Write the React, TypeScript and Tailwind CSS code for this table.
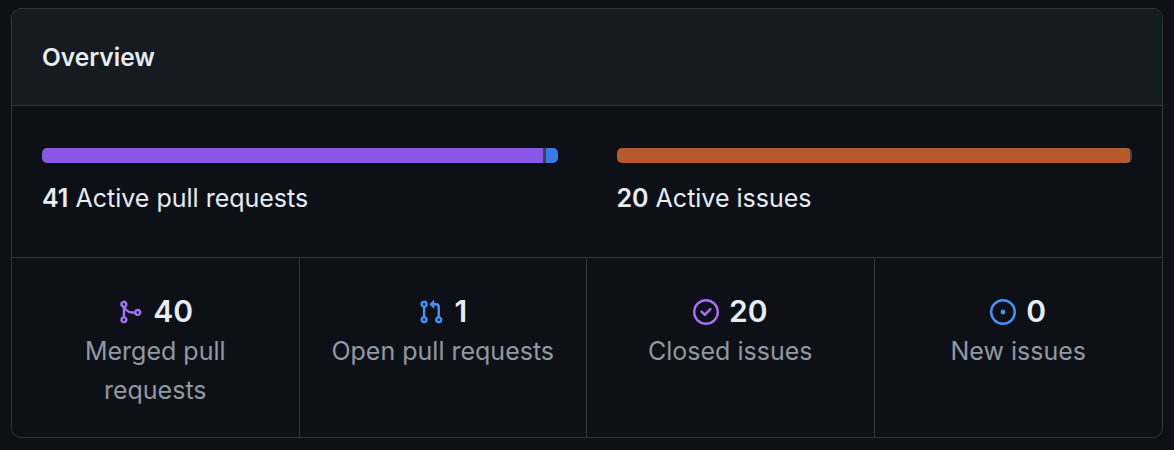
const font = { fontFamily: 'Inter, "Noto Sans", "Liberation Sans", sans-serif' }

function MergeIcon() {
  return (
    <svg viewBox="0 0 16 16" className="w-[26px] h-[26px]" fill="#a371f7">
      <path d="M5.45 5.154A4.25 4.25 0 0 0 9.25 7.5h1.378a2.251 2.251 0 1 1 0 1.5H9.25A5.734 5.734 0 0 1 5 7.123v3.505a2.25 2.25 0 1 1-1.5 0V5.372a2.25 2.25 0 1 1 1.950-.218ZM4.25 13.5a.75.75 0 1 0 0-1.5.75.75 0 0 0 0 1.5Zm8.5-4.5a.75.75 0 1 0 0-1.5.75.75 0 0 0 0 1.5ZM5 3.25a.75.75 0 1 0 0 .005V3.25Z" />
    </svg>
  )
}

function PullIcon() {
  return (
    <svg viewBox="0 0 16 16" className="w-[26px] h-[26px]" fill="#4493f8">
      <path d="M1.5 3.25a2.25 2.25 0 1 1 3 2.122v5.256a2.251 2.251 0 1 1-1.5 0V5.372A2.25 2.25 0 0 1 1.5 3.25Zm5.677-.177L9.573.677A.25.25 0 0 1 10 .854V2.5h1A2.5 2.5 0 0 1 13.5 5v5.628a2.251 2.251 0 1 1-1.5 0V5a1 1 0 0 0-1-1h-1v1.646a.25.25 0 0 1-.427.177L7.177 3.427a.25.25 0 0 1 0-.354ZM3.75 2.5a.75.75 0 1 0 0 1.5.75.75 0 0 0 0-1.5Zm0 9.5a.75.75 0 1 0 0 1.5.75.75 0 0 0 0-1.5Zm8.25.75a.75.75 0 1 0 1.5 0 .75.75 0 0 0-1.5 0Z" />
    </svg>
  )
}

function ClosedIcon() {
  return (
    <svg viewBox="0 0 16 16" className="w-[26px] h-[26px]" fill="#a371f7">
      <path d="M11.28 6.78a.75.75 0 0 0-1.06-1.06L7.25 8.69 5.78 7.22a.75.75 0 0 0-1.06 1.06l2 2a.75.75 0 0 0 1.06 0l3.5-3.5Z" />
      <path d="M16 8A8 8 0 1 1 0 8a8 8 0 0 1 16 0Zm-1.5 0a6.5 6.5 0 1 0-13 0 6.5 6.5 0 0 0 13 0Z" />
    </svg>
  )
}

function OpenIssueIcon() {
  return (
    <svg viewBox="0 0 16 16" className="w-[26px] h-[26px]" fill="#4493f8">
      <path d="M8 9.5a1.5 1.5 0 1 0 0-3 1.5 1.5 0 0 0 0 3Z" />
      <path d="M8 0a8 8 0 1 1 0 16A8 8 0 0 1 8 0ZM1.5 8a6.5 6.5 0 1 0 13 0 6.5 6.5 0 0 0-13 0Z" />
    </svg>
  )
}

const stats = [
  { icon: <MergeIcon />, count: 40, label: 'Merged pull requests', wrap: 'max-w-[160px]' },
  { icon: <PullIcon />, count: 1, label: 'Open pull requests', wrap: '' },
  { icon: <ClosedIcon />, count: 20, label: 'Closed issues', wrap: '' },
  { icon: <OpenIssueIcon />, count: 0, label: 'New issues', wrap: '' },
]

export default function App() {
  return (
    <div className="min-h-[450px] bg-[#0d1117] pt-[8px] px-[11px] text-[#e6edf3]" style={font}>
      <div className="border border-[#30363d] rounded-[10px] overflow-hidden">
        <div className="h-[97px] bg-[#161b22] border-b border-[#30363d] flex items-center px-[30px]">
          <h3 className="text-[24.5px] font-semibold">Overview</h3>
        </div>

        <div className="grid grid-cols-2 gap-[59px] px-[30px] pt-[42px] pb-[41px] border-b border-[#30363d]">
          <div>
            <div className="flex h-[15px] rounded-[5px] overflow-hidden">
              <div className="bg-[#8957e5] flex-1" />
              <div className="bg-[#3d444d] w-[3px]" />
              <div className="bg-[#3b7be8] w-[12px]" />
            </div>
            <div className="mt-[17px] text-[25px] leading-[36px]">
              <span className="font-semibold">41</span> Active pull requests
            </div>
          </div>
          <div>
            <div className="flex h-[15px] rounded-[5px] overflow-hidden">
              <div className="bg-[#b65a2b] flex-1" />
              <div className="bg-[#3d444d] w-[2px]" />
            </div>
            <div className="mt-[17px] text-[25px] leading-[36px]">
              <span className="font-semibold">20</span> Active issues
            </div>
          </div>
        </div>

        <div className="grid grid-cols-4">
          {stats.map((s, i) => (
            <div
              key={s.label}
              className={`flex flex-col items-center text-center pt-[33px] pb-[27px] ${i < 3 ? 'border-r border-[#30363d]' : ''}`}
            >
              <div className="flex items-center gap-[10px] h-[41px]">
                {s.icon}
                <span className="text-[30px] font-semibold leading-[41px]">{s.count}</span>
              </div>
              <div className={`text-[25px] leading-[39px] text-[#9198a1] ${s.wrap}`}>{s.label}</div>
            </div>
          ))}
        </div>
      </div>
    </div>
  )
}
